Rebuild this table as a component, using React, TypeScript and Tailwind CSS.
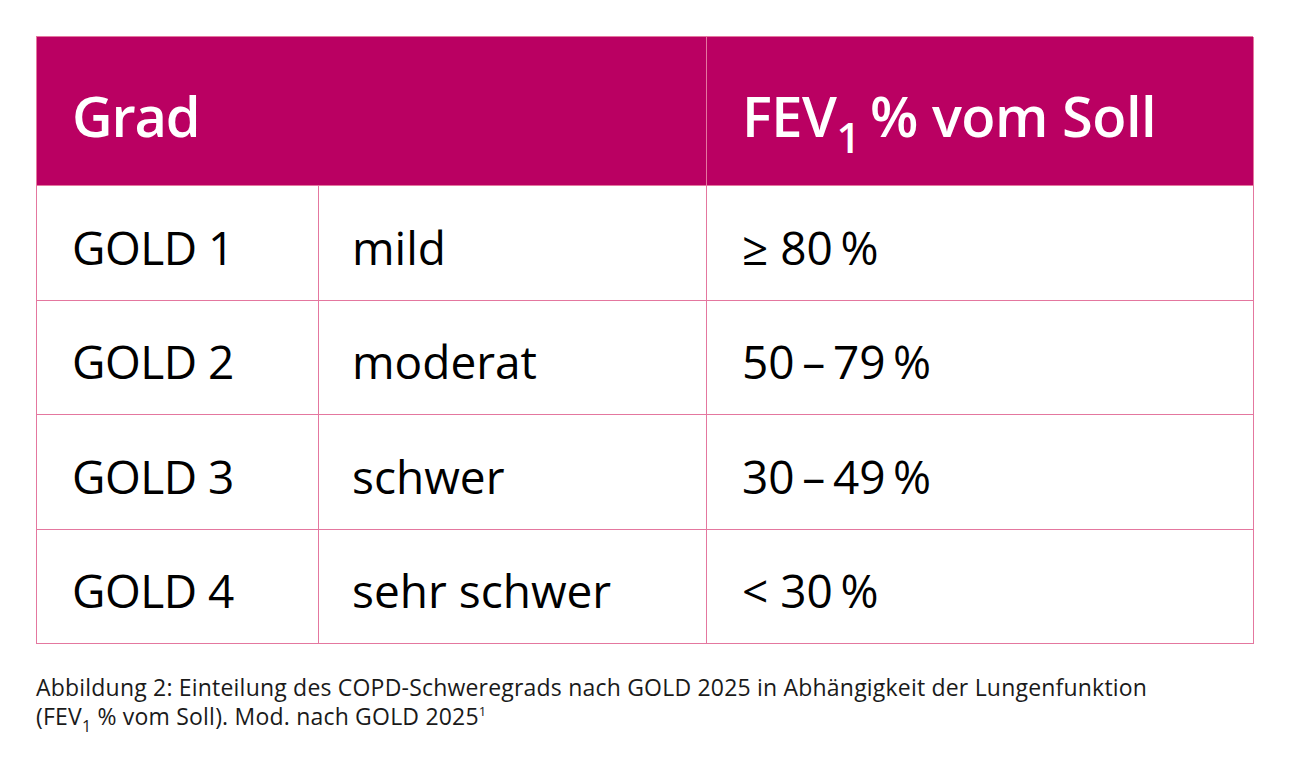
const rows = [
  { grade: 'GOLD 1', label: 'mild', value: '≥ 80\u2009%', h: 'h-[115px]' },
  { grade: 'GOLD 2', label: 'moderat', value: '50\u2009–\u200979\u2009%', h: 'h-[114px]' },
  { grade: 'GOLD 3', label: 'schwer', value: '30\u2009–\u200949\u2009%', h: 'h-[115px]' },
  { grade: 'GOLD 4', label: 'sehr schwer', value: '< 30\u2009%', h: 'h-[114px]' },
]

export default function App() {
  return (
    <div className="min-h-[760px] w-[1290px] bg-white pt-[36px] pl-[36px] font-['Open_Sans',sans-serif] text-black">
      <div className="w-[1217px] border-l border-t border-[#e4779f]">
        {/* header */}
        <div className="grid h-[149px] grid-cols-[670px_547px] bg-[#ba0062] text-white">
          <div className="flex items-center border-b border-r border-[#e4779f] pl-[35px] pt-[8px] text-[56px] font-semibold tracking-[-1.2px]">
            Grad
          </div>
          <div className="flex items-center border-b border-r border-[#e4779f] pl-[35px] pt-[8px] text-[56px] font-semibold tracking-[-0.5px]">
            FEV<sub className="relative top-[22px] text-[42px] align-baseline">1</sub>
            <span className="ml-[10px]">% vom Soll</span>
          </div>
        </div>
        {rows.map((r) => (
          <div key={r.grade} className={`grid grid-cols-[282px_388px_547px] text-[46px] ${r.h}`}>
            <div className="flex items-center border-b border-r border-[#e4779f] pl-[35px] pt-[8px] tracking-[-0.5px]">{r.grade}</div>
            <div className="flex items-center border-b border-r border-[#e4779f] pl-[33px] pt-[8px]">{r.label}</div>
            <div className="flex items-center border-b border-r border-[#e4779f] pl-[35px] pt-[8px]">{r.value}</div>
          </div>
        ))}
      </div>
      <p className="mt-[29px] text-[23px] leading-[29px] tracking-[0.2px] text-[#1a1a1a]">
        Abbildung 2: Einteilung des COPD-Schweregrads nach GOLD 2025 in Abhängigkeit der Lungenfunktion
        <br />
        (FEV<sub className="relative top-[7px] text-[16px] align-baseline">1</sub> % vom Soll). Mod. nach GOLD 2025
        <sup className="relative -top-[9px] text-[13px] align-baseline">1</sup>
      </p>
    </div>
  )
}
